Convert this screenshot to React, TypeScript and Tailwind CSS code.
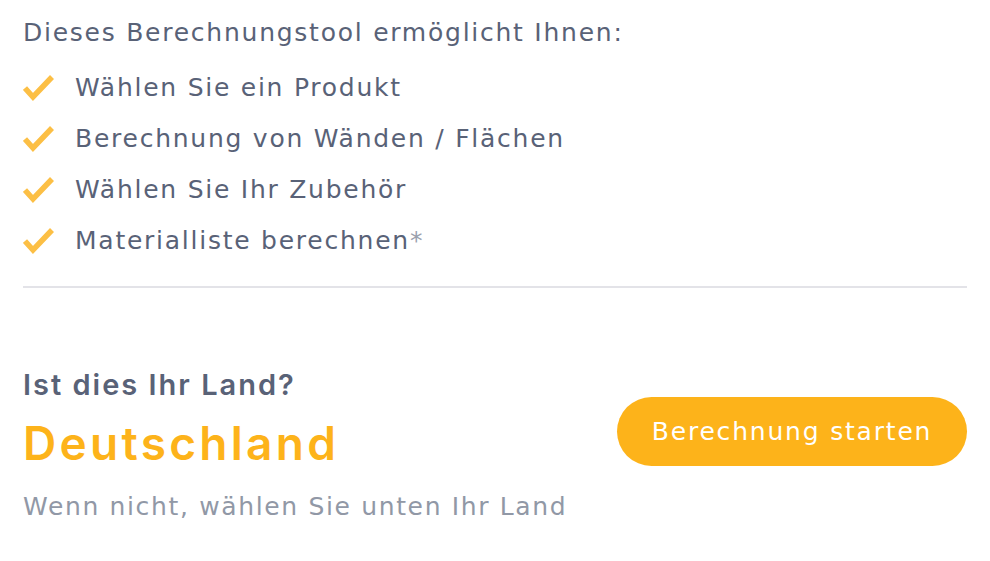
import React from "react";

const items = [
  "Wählen Sie ein Produkt",
  "Berechnung von Wänden / Flächen",
  "Wählen Sie Ihr Zubehör",
  "Materialliste berechnen",
];

function Check() {
  return (
    <svg width="32" height="28" viewBox="0 0 32 28" className="shrink-0">
      <polyline
        points="2,14 10,23 29,3"
        fill="none"
        stroke="#fcbf45"
        strokeWidth="5.5"
        strokeLinejoin="miter"
      />
    </svg>
  );
}

const reg = { fontFamily: "'DejaVu Sans', 'Noto Sans', sans-serif" };
const bold = { fontFamily: "Inter, 'Noto Sans', sans-serif" };

export default function App() {
  return (
    <div className="w-[990px] h-[561px] bg-white px-[23px] pt-[15px] text-[#596277]" style={reg}>
      <div className="h-[36px] flex items-center text-[25px] tracking-[1.75px]">
        Dieses Berechnungstool ermöglicht Ihnen:
      </div>
      <div className="mt-[11px] flex flex-col">
        {items.map((t, i) => (
          <div key={i} className="h-[51px] flex items-center">
            <div className="w-[52px] flex items-center">
              <Check />
            </div>
            <span className="text-[25px] tracking-[1.75px]">
              {t}
              {i === 3 && <span className="text-[#9aa0ad]">*</span>}
            </span>
          </div>
        ))}
      </div>
      <div className="mt-[20px] h-[2px] bg-[#e3e3e8]" />
      <div className="flex justify-between items-start mt-[79px]">
        <div className="flex flex-col">
          <div className="h-[36px] flex items-center text-[29px] font-semibold tracking-[2px]" style={bold}>
            Ist dies Ihr Land?
          </div>
          <div className="mt-[10px] h-[60px] flex items-center text-[46px] font-semibold text-[#fdb31a] tracking-[3.3px]" style={bold}>
            Deutschland
          </div>
          <div className="mt-[16px] h-[36px] flex items-center text-[25px] text-[#9198a6] tracking-[1.65px]">
            Wenn nicht, wählen Sie unten Ihr Land
          </div>
        </div>
        <button className="mt-[30px] w-[350px] h-[69px] rounded-full bg-[#fdb31a] text-white text-[25px] tracking-[1.8px] flex items-center justify-center">
          Berechnung starten
        </button>
      </div>
    </div>
  );
}
